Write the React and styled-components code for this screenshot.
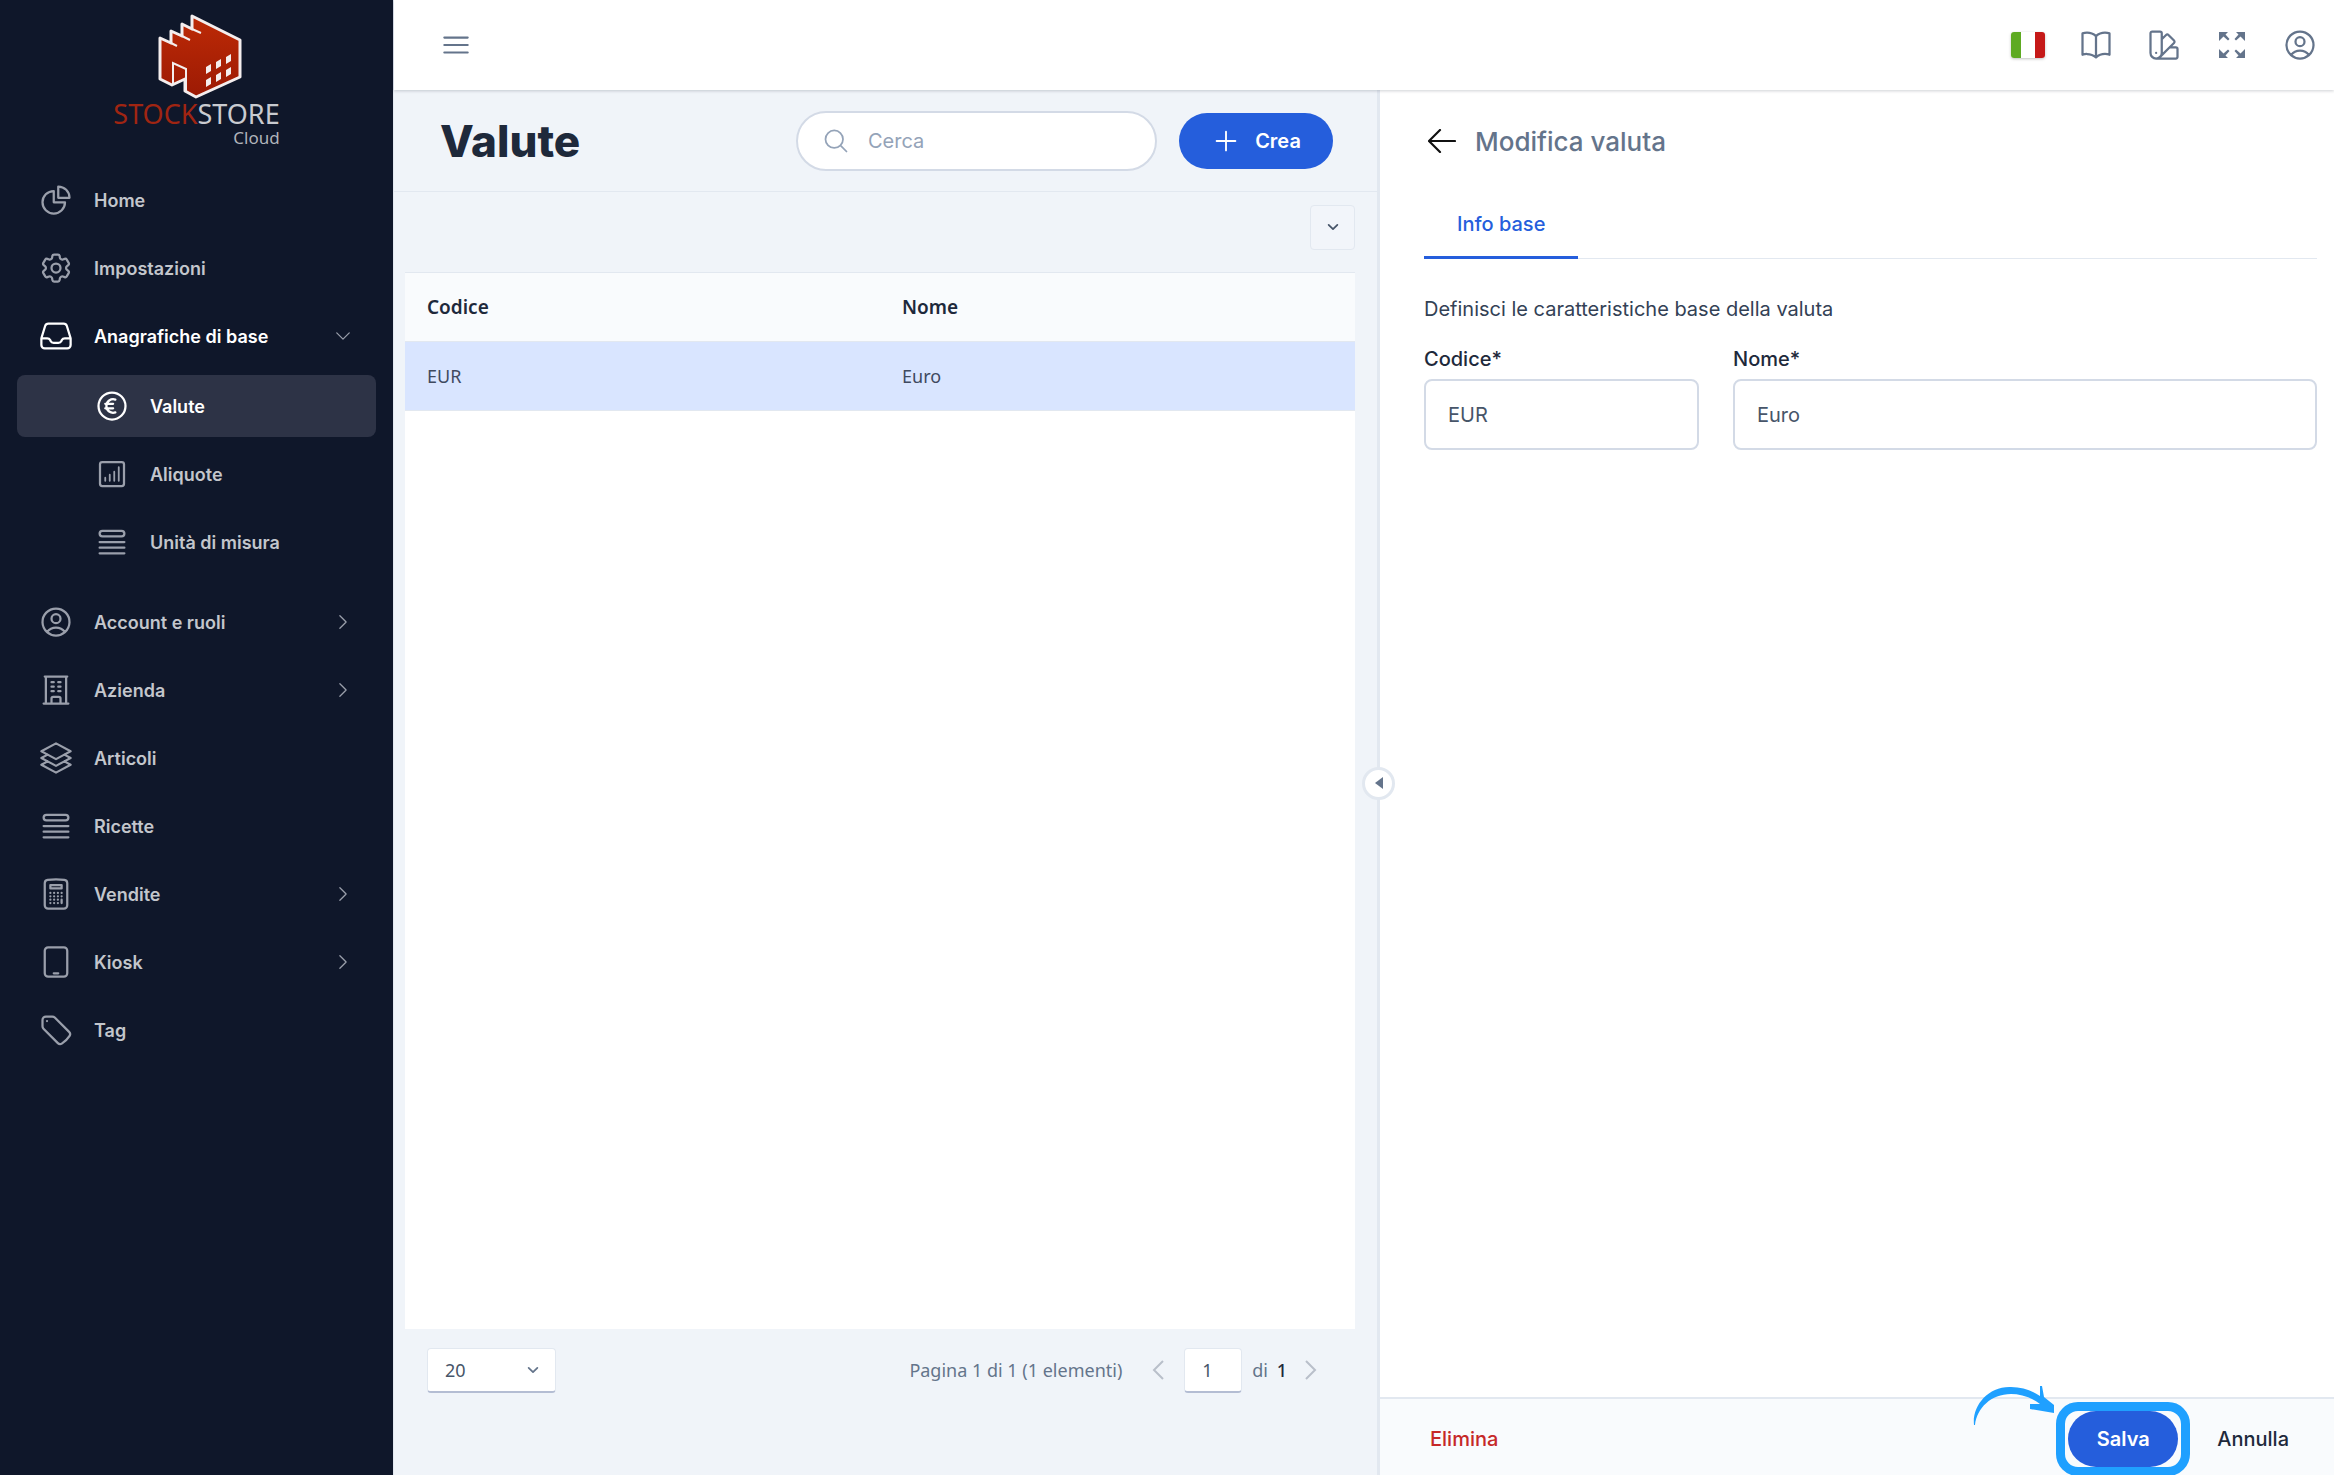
import React, { useState } from "react";
import styled, { createGlobalStyle, css } from "styled-components";
import {
  HiOutlineBars3,
  HiOutlineBookOpen,
  HiOutlineBuildingOffice,
  HiOutlineCalculator,
  HiOutlineChartPie,
  HiOutlineChevronDown,
  HiOutlineChevronRight,
  HiOutlineCog6Tooth,
  HiOutlineCurrencyEuro,
  HiOutlineDeviceTablet,
  HiOutlineInbox,
  HiOutlineMagnifyingGlass,
  HiOutlinePlus,
  HiOutlineQueueList,
  HiOutlineSquare3Stack3D,
  HiOutlineSwatch,
  HiOutlineTag,
  HiOutlineUserCircle,
} from "react-icons/hi2";

const palette = {
  navBackground: "#0f172a",
  navActive: "#2d3346",
  navText: "#c3c6cc",
  navIcon: "#9a9fab",
  page: "#f0f4f9",
  border: "#e2e8f0",
  inputBorder: "#d3dae6",
  text: "#1e293b",
  muted: "#64748b",
  faint: "#94a3b8",
  primary: "#255edc",
  danger: "#c62828",
  highlight: "#1fa0ff",
};

const GlobalStyle = createGlobalStyle`
  * {
    box-sizing: border-box;
  }
  body {
    margin: 0;
    font-family: Inter, "Noto Sans", sans-serif;
    font-size: 20px;
    color: ${palette.text};
    background: #fff;
  }
  button, input, select {
    font: inherit;
    color: inherit;
  }
  button {
    border: 0;
    padding: 0;
    background: none;
    cursor: pointer;
  }
`;

const Layout = styled.div`
  display: flex;
  min-height: 100vh;
`;

const SideNav = styled.nav`
  flex: 0 0 393px;
  background: ${palette.navBackground};
`;

const Logo = styled.a`
  display: flex;
  flex-direction: column;
  align-items: center;
  height: 169px;
  padding-top: 13px;
  text-decoration: none;
  font-family: "Noto Sans", sans-serif;
  svg {
    margin-left: 6px;
  }
`;

const LogoText = styled.div`
  display: flex;
  flex-direction: column;
  align-items: flex-end;
`;

const LogoName = styled.span`
  font-size: 27px;
  line-height: 30px;
  color: #c9cbd0;
  b {
    font-weight: 400;
    color: #a02512;
  }
`;

const LogoSub = styled.span`
  font-size: 17px;
  line-height: 18px;
  color: #b0b3ba;
`;

const NavList = styled.ul`
  list-style: none;
  margin: 0;
  padding: 0 17px;
  display: flex;
  flex-direction: column;
  gap: 6px;
`;

const SubList = styled.ul`
  list-style: none;
  margin: 8px 0 12px;
  padding: 0;
  display: flex;
  flex-direction: column;
  gap: 6px;
`;

const NavItem = styled.a`
  display: flex;
  align-items: center;
  gap: 20px;
  height: 62px;
  padding: 0 23px 0 ${(props) => (props.$child ? "77px" : "21px")};
  border-radius: 8px;
  color: ${palette.navText};
  font-size: 18px;
  font-weight: 600;
  text-decoration: none;
  svg {
    flex: none;
    color: ${palette.navIcon};
  }
  span {
    flex: 1;
    white-space: nowrap;
  }
  ${(props) =>
    props.$open &&
    css`
      color: #fff;
      svg:first-child {
        color: #fff;
      }
    `}
  ${(props) =>
    props.$active &&
    css`
      background: ${palette.navActive};
    `}
`;

const Main = styled.div`
  flex: 1;
  min-width: 0;
  display: flex;
  flex-direction: column;
  border-left: 1px solid ${palette.border};
`;

const TopBar = styled.header`
  position: relative;
  z-index: 2;
  display: flex;
  align-items: center;
  justify-content: space-between;
  height: 90px;
  padding: 0 16px 0 44px;
  background: #fff;
  color: ${palette.muted};
  box-shadow: 0 1px 3px rgba(15, 23, 42, 0.2);
`;

const IconButton = styled.button`
  display: flex;
  align-items: center;
  justify-content: center;
  min-width: 36px;
  height: 36px;
`;

const TopActions = styled.div`
  display: flex;
  align-items: center;
  gap: 32px;
`;

const Flag = styled.span`
  display: block;
  width: 34px;
  height: 26px;
  border-radius: 3px;
  background: linear-gradient(
    90deg,
    #5eaa22 0 10px,
    #fff 10px 24px,
    #c51918 24px 34px
  );
  box-shadow: 0 1px 3px rgba(0, 0, 0, 0.25);
`;

const Content = styled.div`
  flex: 1;
  display: grid;
  grid-template-columns: minmax(0, 986fr) minmax(0, 954fr);
`;

const ListPanel = styled.section`
  position: relative;
  display: flex;
  flex-direction: column;
  background: ${palette.page};
  border-right: 3px solid ${palette.border};
`;

const ListHeader = styled.div`
  display: flex;
  align-items: center;
  height: 102px;
  padding: 0 44px 0 46px;
  border-bottom: 1px solid ${palette.border};
`;

const Title = styled.h1`
  flex: 1;
  margin: 0;
  font-size: 44px;
  font-weight: 800;
`;

const SearchBox = styled.label`
  display: flex;
  align-items: center;
  gap: 18px;
  width: 361px;
  height: 60px;
  margin-right: 22px;
  padding: 0 24px;
  border: 2px solid ${palette.inputBorder};
  border-radius: 30px;
  background: #fff;
  color: ${palette.faint};
  input {
    flex: 1;
    min-width: 0;
    border: 0;
    outline: 0;
    padding: 0;
    background: none;
    &::placeholder {
      color: ${palette.faint};
    }
  }
`;

const PillButton = styled.button`
  display: flex;
  align-items: center;
  justify-content: center;
  gap: 14px;
  width: ${(props) => props.$width};
  height: 56px;
  border-radius: 28px;
  background: ${palette.primary};
  color: #fff;
  font-weight: 600;
`;

const Toolbar = styled.div`
  display: flex;
  align-items: center;
  justify-content: flex-end;
  height: 80px;
  padding: 0 22px 10px;
`;

const SquareButton = styled.button`
  display: flex;
  align-items: center;
  justify-content: center;
  width: 45px;
  height: 45px;
  border: 1px solid ${palette.border};
  border-radius: 4px;
  background: #f2f5fa;
  color: #475569;
`;

const TableArea = styled.div`
  flex: 1;
  margin: 0 22px 0 11px;
  background: #fff;
  border-top: 1px solid ${palette.border};
`;

const Table = styled.table`
  width: 100%;
  border-collapse: collapse;
  table-layout: fixed;
  font-family: "Noto Sans", sans-serif;
  font-size: 18px;
  th,
  td {
    height: 69px;
    padding: 0 22px;
    text-align: left;
    border-bottom: 1px solid ${palette.border};
  }
  th {
    height: 68px;
    background: #f9fbfd;
    font-size: 19px;
    font-weight: 600;
  }
  td {
    background: #d9e5ff;
    color: #3f4a5f;
  }
`;

const Pager = styled.div`
  display: flex;
  align-items: center;
  height: 146px;
  padding: 0 60px 64px 33px;
  font-family: "Noto Sans", sans-serif;
  font-size: 18px;
  color: ${palette.muted};
`;

const controlBox = css`
  height: 45px;
  border: 1px solid ${palette.border};
  border-bottom: 2px solid #b4bdd3;
  border-radius: 4px;
  background: #fff;
  color: #475569;
`;

const SelectWrap = styled.div`
  display: grid;
  align-items: center;
  margin-right: auto;
  select,
  svg {
    grid-area: 1 / 1;
  }
  svg {
    justify-self: end;
    margin-right: 16px;
    pointer-events: none;
  }
`;

const PageSize = styled.select`
  ${controlBox}
  width: 129px;
  padding: 0 17px;
  appearance: none;
`;

const PageInput = styled.input`
  ${controlBox}
  width: 58px;
  margin: 0 10px 0 20px;
  padding: 0 17px;
`;

const PagerTotal = styled.span`
  margin-right: 14px;
  b {
    margin-left: 4px;
    font-weight: 500;
    color: ${palette.text};
  }
`;

const ArrowButton = styled.button`
  display: flex;
  margin-left: ${(props) => (props.$left ? "30px" : "4px")};
  color: #b9bfca;
`;

const Collapse = styled.button`
  position: absolute;
  right: -18px;
  top: calc(50% - 16px);
  display: flex;
  align-items: center;
  justify-content: center;
  width: 33px;
  height: 33px;
  border: 3px solid ${palette.border};
  border-radius: 50%;
  background: #fff;
  z-index: 1;
`;

const DetailPanel = styled.section`
  display: flex;
  flex-direction: column;
  background: #fff;
`;

const DetailBody = styled.div`
  flex: 1;
  padding: 0 17px 0 44px;
`;

const DetailTitle = styled.div`
  display: flex;
  align-items: center;
  gap: 15px;
  height: 102px;
  h2 {
    margin: 0;
    font-size: 26px;
    font-weight: 500;
    color: ${palette.muted};
  }
`;

const Tabs = styled.div`
  display: flex;
  height: 67px;
  border-bottom: 1px solid ${palette.border};
`;

const Tab = styled.button`
  height: 67px;
  padding: 0 33px;
  border-bottom: 3px solid ${palette.primary};
  color: ${palette.primary};
  font-weight: 500;
`;

const Intro = styled.p`
  margin: 37px 0 24px;
  line-height: 26px;
  color: #334155;
`;

const Fields = styled.div`
  display: grid;
  grid-template-columns: 275px minmax(0, 1fr);
  gap: 34px;
`;

const Field = styled.label`
  display: flex;
  flex-direction: column;
  gap: 7px;
  line-height: 26px;
  font-weight: 500;
  input {
    width: 100%;
    height: 71px;
    padding: 0 22px;
    border: 2px solid ${palette.inputBorder};
    border-radius: 8px;
    background: #fff;
    color: #475569;
    font-weight: 400;
  }
`;

const DetailFooter = styled.footer`
  display: flex;
  align-items: center;
  height: 78px;
  padding: 3px 45px 0 50px;
  border-top: 2px solid ${palette.border};
  background: #f9fbfd;
`;

const TextButton = styled.button`
  color: ${(props) => props.$color};
  font-weight: 500;
`;

const SaveArea = styled.div`
  position: relative;
  margin: 0 39px 0 auto;
`;

const Highlight = styled.span`
  position: absolute;
  inset: -9px -12px;
  border: 9px solid ${palette.highlight};
  border-radius: 22px;
  pointer-events: none;
`;

const Pointer = styled.svg`
  position: absolute;
  right: 123px;
  bottom: 41px;
`;

const FactoryLogo = () => (
  <svg width="84" height="86" viewBox="0 0 84 86">
    <defs>
      <linearGradient id="brick" x1="0" y1="0" x2="0" y2="1">
        <stop offset="0" stopColor="#bd2a06" />
        <stop offset="1" stopColor="#9c1a04" />
      </linearGradient>
    </defs>
    <path
      d="M2 25L13 30V18L24 23V11L34 16V3L82 27V64L38 84L27 78V66L14 72L2 66Z"
      fill="url(#brick)"
      stroke="#f4eeee"
      strokeWidth="3"
      strokeLinejoin="round"
    />
    <path
      d="M13 30l6 3M24 23l8 4M34 16l9 4"
      stroke="#f4eeee"
      strokeWidth="2"
    />
    <path
      d="M15 71V50L28 56V78"
      fill="none"
      stroke="#f4eeee"
      strokeWidth="2"
    />
    <path
      d="M48 54l5-3v7l-5 3zM58 49l5-3v7l-5 3zM68 44l5-3v7l-5 3zM48 67l5-3v7l-5 3zM58 62l5-3v7l-5 3zM68 57l5-3v7l-5 3z"
      fill="#f4eeee"
    />
  </svg>
);

const ChartBox = ({ size }) => (
  <svg
    width={size}
    height={size}
    viewBox="0 0 24 24"
    fill="none"
    stroke="currentColor"
    strokeWidth="1.5"
    strokeLinecap="round"
  >
    <rect x="4" y="4" width="16" height="16" rx="1.5" />
    <path strokeWidth="1.2" d="M7.500 16.500v-2M10.500 16.500v-4M13.500 16.500v-6M16.500 16.500v-9" />
  </svg>
);

const ExpandIcon = () => (
  <svg width="28" height="28" viewBox="0 0 28 28" fill="currentColor">
    <path d="M1 1h9L7.500 3.500l4 4.500-1.500 1.500L5.500 5.500 3.500 7.500 1 10zM27 1h-9l2.500 2.500-4 4.500 1.500 1.500 4.500-4 2 2L27 10zM1 27h9l-2.500-2.500 4-4.500-1.500-1.500-4.500 4-2-2L1 18zM27 27h-9l2.500-2.500-4-4.500 1.500-1.500 4.500 4 2-2L27 18z" />
  </svg>
);

const BackArrow = () => (
  <svg
    width="28"
    height="24"
    viewBox="0 0 28 24"
    fill="none"
    stroke="#111"
    strokeWidth="2.200"
    strokeLinecap="round"
    strokeLinejoin="round"
  >
    <path d="M27 12H1M12 1L1 12l11 11" />
  </svg>
);

const PageArrow = ({ left }) => (
  <ArrowButton $left={left} aria-label={left ? "Precedente" : "Successiva"}>
    <svg
      width="12"
      height="20"
      viewBox="0 0 12 20"
      fill="none"
      stroke="currentColor"
      strokeWidth="2"
    >
      <path d={left ? "M11 1L2 10l9 9" : "M1 1l9 9-9 9"} />
    </svg>
  </ArrowButton>
);

const navData = [
  { title: "Home", icon: HiOutlineChartPie },
  { title: "Impostazioni", icon: HiOutlineCog6Tooth },
  {
    title: "Anagrafiche di base",
    icon: HiOutlineInbox,
    children: [
      { title: "Valute", icon: HiOutlineCurrencyEuro, active: true },
      { title: "Aliquote", icon: ChartBox },
      { title: "Unità di misura", icon: HiOutlineQueueList },
    ],
  },
  { title: "Account e ruoli", icon: HiOutlineUserCircle, more: true },
  { title: "Azienda", icon: HiOutlineBuildingOffice, more: true },
  { title: "Articoli", icon: HiOutlineSquare3Stack3D },
  { title: "Ricette", icon: HiOutlineQueueList },
  { title: "Vendite", icon: HiOutlineCalculator, more: true },
  { title: "Kiosk", icon: HiOutlineDeviceTablet, more: true },
  { title: "Tag", icon: HiOutlineTag },
];

const NavEntry = ({ item, child }) => {
  const Icon = item.icon;
  return (
    <li>
      <NavItem
        href="#"
        $child={child}
        $active={item.active}
        $open={item.active || item.children}
      >
        <Icon size={36} />
        <span>{item.title}</span>
        {item.children && <HiOutlineChevronDown size={20} />}
        {item.more && <HiOutlineChevronRight size={20} />}
      </NavItem>
      {item.children && (
        <SubList>
          {item.children.map((sub) => (
            <NavEntry item={sub} child key={sub.title} />
          ))}
        </SubList>
      )}
    </li>
  );
};

const App = () => {
  const [page, setPage] = useState("1");
  const [form, setForm] = useState({ codice: "EUR", nome: "Euro" });
  const onChange = (e) => setForm({ ...form, [e.target.name]: e.target.value });

  return (
    <>
      <GlobalStyle />
      <Layout>
        <SideNav>
          <Logo href="#">
            <FactoryLogo />
            <LogoText>
              <LogoName>
                <b>STOCK</b>STORE
              </LogoName>
              <LogoSub>Cloud</LogoSub>
            </LogoText>
          </Logo>
          <NavList>
            {navData.map((item) => (
              <NavEntry item={item} key={item.title} />
            ))}
          </NavList>
        </SideNav>
        <Main>
          <TopBar>
            <IconButton aria-label="Menu">
              <HiOutlineBars3 size={34} />
            </IconButton>
            <TopActions>
              <IconButton aria-label="Lingua">
                <Flag />
              </IconButton>
              <IconButton aria-label="Guida">
                <HiOutlineBookOpen size={36} />
              </IconButton>
              <IconButton aria-label="Tema">
                <HiOutlineSwatch size={36} />
              </IconButton>
              <IconButton aria-label="Schermo intero">
                <ExpandIcon />
              </IconButton>
              <IconButton aria-label="Profilo">
                <HiOutlineUserCircle size={36} />
              </IconButton>
            </TopActions>
          </TopBar>
          <Content>
            <ListPanel>
              <ListHeader>
                <Title>Valute</Title>
                <SearchBox>
                  <HiOutlineMagnifyingGlass size={28} />
                  <input type="search" placeholder="Cerca" aria-label="Cerca" />
                </SearchBox>
                <PillButton $width="154px">
                  <HiOutlinePlus size={30} />
                  Crea
                </PillButton>
              </ListHeader>
              <Toolbar>
                <SquareButton aria-label="Espandi">
                  <HiOutlineChevronDown size={14} strokeWidth={3} />
                </SquareButton>
              </Toolbar>
              <TableArea>
                <Table>
                  <thead>
                    <tr>
                      <th>Codice</th>
                      <th>Nome</th>
                    </tr>
                  </thead>
                  <tbody>
                    <tr>
                      <td>EUR</td>
                      <td>Euro</td>
                    </tr>
                  </tbody>
                </Table>
              </TableArea>
              <Pager>
                <SelectWrap>
                  <PageSize aria-label="Elementi per pagina">
                    <option>20</option>
                  </PageSize>
                  <HiOutlineChevronDown size={14} strokeWidth={3} />
                </SelectWrap>
                <span>Pagina 1 di 1 (1 elementi)</span>
                <PageArrow left />
                <PageInput
                  aria-label="Pagina"
                  value={page}
                  onChange={(e) => setPage(e.target.value)}
                />
                <PagerTotal>
                  di <b>1</b>
                </PagerTotal>
                <PageArrow />
              </Pager>
              <Collapse aria-label="Riduci">
                <svg width="8" height="12" viewBox="0 0 8 12">
                  <path d="M8 0v12L0 6z" fill={palette.muted} />
                </svg>
              </Collapse>
            </ListPanel>
            <DetailPanel>
              <DetailBody>
                <DetailTitle>
                  <IconButton aria-label="Indietro">
                    <BackArrow />
                  </IconButton>
                  <h2>Modifica valuta</h2>
                </DetailTitle>
                <Tabs>
                  <Tab>Info base</Tab>
                </Tabs>
                <Intro>Definisci le caratteristiche base della valuta</Intro>
                <Fields>
                  <Field>
                    Codice*
                    <input name="codice" value={form.codice} onChange={onChange} />
                  </Field>
                  <Field>
                    Nome*
                    <input name="nome" value={form.nome} onChange={onChange} />
                  </Field>
                </Fields>
              </DetailBody>
              <DetailFooter>
                <TextButton $color={palette.danger}>Elimina</TextButton>
                <SaveArea>
                  <PillButton $width="110px">Salva</PillButton>
                  <Highlight />
                  <Pointer width="82" height="40" viewBox="0 0 82 40">
                    <path
                      d="M1 39C-1 20 15 0 38 1c12 0 22 4 29 9V0h2l2 11 10 8v8l-24-4v-5l10 0C58 11 47 8 38 8 18 8 4 22 2 39z"
                      fill={palette.highlight}
                    />
                  </Pointer>
                </SaveArea>
                <TextButton $color={palette.text}>Annulla</TextButton>
              </DetailFooter>
            </DetailPanel>
          </Content>
        </Main>
      </Layout>
    </>
  );
};

export default App;
